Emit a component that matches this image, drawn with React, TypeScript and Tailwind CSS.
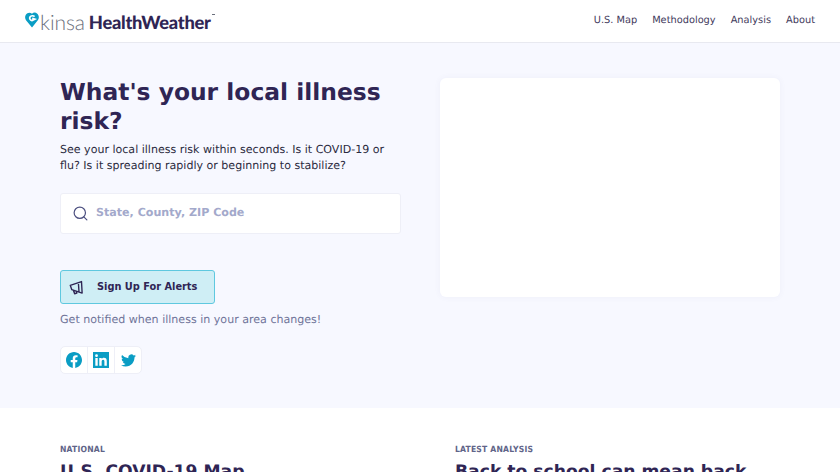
import { Search } from "lucide-react";

const navLinks = ["U.S. Map", "Methodology", "Analysis", "About"];

function KinsaLogo() {
  return (
    <div className="flex items-center mt-[3px]">
      <svg width="14" height="16" viewBox="0 0 14 16" className="mr-[1px] -mt-[5px]">
        <path
          d="M7 15.5 L1 8.2 C-0.6 5.8 0 2.6 2.4 1.2 C4 0.2 5.8 0.6 7 1.8 C8.4 0.4 10.4 0.2 12 1.4 C14 3 14.4 5.8 13 8 Z"
          fill="#0a9dc4"
        />
        <path d="M9.6 4.6 C8.4 3.4 6 3.4 5 5 C4.2 6.4 5 8.2 7 8.6 L9.8 7.2 L7.2 6.4" fill="none" stroke="#fff" strokeWidth="1.7" />
      </svg>
      <span className="font-['Lato',sans-serif] font-light text-[21px] leading-none tracking-[-0.1px] text-[#6a6f7c]">kinsa</span>
      <span className="ml-[4px] font-['Lato',sans-serif] font-black text-[18.3px] leading-none tracking-[-0.25px] text-[#2f2554]">HealthWeather</span>
      <span className="self-start mt-[2px] ml-[1px] w-[3px] h-[1px] bg-[#6a6f7c]" />
    </div>
  );
}

function Header() {
  return (
    <header className="h-[43px] bg-white border-b border-[#e8e9f0] flex items-center justify-between px-[25px]">
      <KinsaLogo />
      <nav className="flex gap-[15px] mt-[1px] text-[9.8px] text-[#3f3a5c]">
        {navLinks.map((link) => (
          <a key={link} href="#">
            {link}
          </a>
        ))}
      </nav>
    </header>
  );
}

function SocialButtons() {
  return (
    <div className="mt-[18px] flex w-fit bg-white border border-[#eeeff7] rounded-[5px]">
      <div className="w-[27px] h-[26px] flex items-center justify-center border-r border-[#eeeff7]">
        <svg width="16" height="16" viewBox="0 0 24 24" fill="#0a9dc4">
          <path d="M24 12.07C24 5.4 18.63 0 12 0S0 5.4 0 12.07c0 6.03 4.39 11.03 10.13 11.93v-8.44H7.08v-3.49h3.05V9.41c0-3.02 1.79-4.69 4.53-4.69 1.31 0 2.68.24 2.68.24v2.97h-1.51c-1.49 0-1.96.93-1.96 1.89v2.25h3.33l-.53 3.49h-2.8V24C19.61 23.1 24 18.1 24 12.07z" />
        </svg>
      </div>
      <div className="w-[27px] h-[26px] flex items-center justify-center border-r border-[#eeeff7]">
        <svg width="16" height="16" viewBox="0 0 24 24" fill="#0a9dc4">
          <path d="M0 0h24v24H0zM3.5 9v11.5h3.6V9zM5.3 3.4a2.1 2.1 0 1 0 0 4.2 2.1 2.1 0 0 0 0-4.2zM9.4 9v11.5H13v-5.7c0-1.5.3-3 2.2-3 1.8 0 1.9 1.7 1.9 3.1v5.6h3.6v-6.3c0-3.1-.7-5.5-4.3-5.5-1.7 0-2.9.9-3.4 1.8V9z" fillRule="evenodd" />
        </svg>
      </div>
      <div className="w-[26px] h-[26px] flex items-center justify-center">
        <svg width="15" height="15" viewBox="0 0 24 24" fill="#0a9dc4">
          <path d="M24 4.56a9.83 9.83 0 0 1-2.83.78 4.93 4.93 0 0 0 2.17-2.72 9.86 9.86 0 0 1-3.13 1.2 4.92 4.92 0 0 0-8.38 4.48A13.96 13.96 0 0 1 1.67 3.15a4.92 4.92 0 0 0 1.52 6.57 4.9 4.9 0 0 1-2.23-.62v.06a4.92 4.92 0 0 0 3.95 4.83 4.93 4.93 0 0 1-2.22.08 4.93 4.93 0 0 0 4.6 3.42A9.87 9.87 0 0 1 0 19.54a13.94 13.94 0 0 0 7.55 2.21c9.05 0 14-7.5 14-14 0-.21 0-.42-.02-.63A10 10 0 0 0 24 4.56z" />
        </svg>
      </div>
    </div>
  );
}

function Hero() {
  return (
    <section className="h-[365px] bg-[#f7f8ff] px-[60px] pt-[35px] flex gap-[39px]">
      <div className="w-[341px]">
        <h1 className="text-[23.4px] leading-[29px] font-bold text-[#2f2554]">What's your local illness risk?</h1>
        <p className="mt-[6px] text-[11.05px] leading-[16px] text-[#2b2b40]">
          See your local illness risk within seconds. Is it COVID-19 or flu? Is it spreading rapidly or beginning to stabilize?
        </p>
        <div className="mt-[19px] h-[41px] bg-white border border-[#eeeff7] rounded-[3px] flex items-center pl-[11px]">
          <Search size={17} strokeWidth={1.7} className="text-[#4d5080]" />
          <span className="ml-[7px] text-[11.1px] font-bold text-[#a3a9cb]">State, County, ZIP Code</span>
        </div>
        <button className="mt-[36px] w-[155px] h-[34px] bg-[#cfeef5] border border-[#5fc8df] rounded-[3px] flex items-center pl-[8px] text-[#2f2554]">
          <svg width="15" height="15" viewBox="0 0 24 24" fill="none" stroke="currentColor" strokeWidth="2.2" strokeLinejoin="round" strokeLinecap="round">
            <path d="M2 8.5 L4.5 15.5 L21 21 L20 2.5 Z M15 4.5 L16 19 M7 16.5 L9 22 L12.5 21 L11.5 18" />
          </svg>
          <span className="ml-[13px] text-[9.8px] font-bold">Sign Up For Alerts</span>
        </button>
        <p className="mt-[8px] text-[11.07px] leading-[16px] text-[#6f7499]">Get notified when illness in your area changes!</p>
        <SocialButtons />
      </div>
      <div className="w-[340px] h-[219px] bg-white rounded-[6px] shadow-[0_0_6px_rgba(90,90,160,0.06)]" />
    </section>
  );
}

function Latest() {
  return (
    <section className="bg-white px-[60px] pt-[37px] flex">
      <div className="w-[395px]">
        <div className="font-['DejaVu_Sans_Condensed','DejaVu_Sans',sans-serif] text-[8.5px] leading-[11px] font-bold tracking-[0.2px] text-[#5f6488]">NATIONAL</div>
        <h2 className="mt-[4px] text-[17.2px] leading-[24px] font-bold text-[#2f2554]">U.S. COVID-19 Map</h2>
      </div>
      <div className="w-[310px]">
        <div className="font-['DejaVu_Sans_Condensed','DejaVu_Sans',sans-serif] text-[8.5px] leading-[11px] font-bold tracking-[0.2px] text-[#5f6488]">LATEST ANALYSIS</div>
        <h2 className="mt-[4px] text-[17.2px] leading-[24px] font-bold text-[#2f2554]">Back to school can mean back to illness</h2>
      </div>
    </section>
  );
}

export default function App() {
  return (
    <div className="font-['DejaVu_Sans',sans-serif] [text-rendering:geometricPrecision] w-[840px] h-[472px] overflow-hidden bg-white">
      <Header />
      <Hero />
      <Latest />
    </div>
  );
}
